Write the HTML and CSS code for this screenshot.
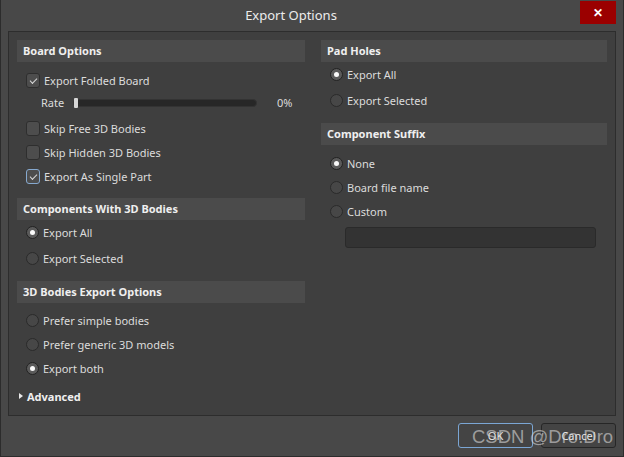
FILE: index.html
```html
<!DOCTYPE html>
<html>
<head>
<meta charset="utf-8">
<link rel="stylesheet" href="styles.css">
</head>
<body>
<div class="window">
  <div class="titlebar">
    <div class="title">Export Options</div>
    <div class="close">&#x2715;</div>
  </div>
  <div class="panel">
    <div class="col">
      <div class="hdr">Board Options</div>
      <div class="row r-first"><span class="cb checked"></span><span>Export Folded Board</span></div>
      <div class="rate">
        <span class="rate-label">Rate</span>
        <span class="track"><span class="handle"></span></span>
        <span class="pct">0%</span>
      </div>
      <div class="row r-skip"><span class="cb"></span><span>Skip Free 3D Bodies</span></div>
      <div class="row"><span class="cb"></span><span>Skip Hidden 3D Bodies</span></div>
      <div class="row"><span class="cb checked focus"></span><span>Export As Single Part</span></div>

      <div class="hdr h2">Components With 3D Bodies</div>
      <div class="row r-tight"><span class="rb on"></span><span>Export All</span></div>
      <div class="row r-gap"><span class="rb"></span><span>Export Selected</span></div>

      <div class="hdr h3">3D Bodies Export Options</div>
      <div class="row r-first2"><span class="rb"></span><span>Prefer simple bodies</span></div>
      <div class="row"><span class="rb"></span><span>Prefer generic 3D models</span></div>
      <div class="row"><span class="rb on"></span><span>Export both</span></div>
      <div class="adv"><span class="tri"></span><span>Advanced</span></div>
    </div>
    <div class="col">
      <div class="hdr">Pad Holes</div>
      <div class="row r-tight"><span class="rb on"></span><span>Export All</span></div>
      <div class="row r-gap"><span class="rb"></span><span>Export Selected</span></div>

      <div class="hdr h2r">Component Suffix</div>
      <div class="row r-first"><span class="rb on"></span><span>None</span></div>
      <div class="row"><span class="rb"></span><span>Board file name</span></div>
      <div class="row"><span class="rb"></span><span>Custom</span></div>
      <div class="input"></div>
    </div>
  </div>
  <div class="buttons">
    <div class="btn focus">OK</div>
    <div class="btn">Cancel</div>
  </div>
  <div class="watermark">CSDN @Dro.Dro</div>
</div>
</body>
</html>
```
FILE: styles.css
```css
* { box-sizing: border-box; }
html, body { margin: 0; padding: 0; background: #474747; }
body {
  font-family: "Noto Sans", "Open Sans", sans-serif;
  font-size: 11px;
  color: #dcdcdc;
}
.window {
  position: relative;
  width: 624px;
  height: 457px;
  background: #484848;
  border-left: 1px solid #2c2c2c;
  border-bottom: 1px solid #2c2c2c;
  border-right: 1px solid #2c2c2c;
  overflow: hidden;
}
.titlebar {
  display: flex;
  height: 31px;
  align-items: flex-start;
}
.title {
  flex: 1;
  text-align: center;
  font-size: 13px;
  color: #ececec;
  line-height: 31px;
  padding-left: 1px;
}
.close {
  width: 36px;
  height: 23px;
  margin-top: 1px;
  margin-right: 7px;
  background: #9b0000;
  color: #fff;
  font-weight: bold;
  font-size: 12px;
  display: flex;
  align-items: center;
  justify-content: center;
}
.panel {
  margin: 0 7px 0 7px;
  height: 385px;
  background: #3f3f3f;
  border: 1px solid #2d2d2d;
  padding: 8px 8px 0 8px;
  display: grid;
  grid-template-columns: 288px 286px;
  column-gap: 16px;
}
.col { display: flex; flex-direction: column; }
.hdr {
  height: 22px;
  line-height: 21px;
  background: #4b4b4b;
  padding-left: 6px;
  font-weight: bold;
  color: #efefef;
}
.row {
  height: 24px;
  display: flex;
  align-items: center;
  padding-left: 9px;
  padding-bottom: 2px;
  gap: 4px;
}
.r-first { margin-top: 7px; }
.r-skip { margin-top: 4px; }
.r-tight { margin-top: 1px; }
.r-gap { margin-top: 2px; }
.r-first2 { margin-top: 6px; }
.h2 { margin-top: 9px; }
.h3 { margin-top: 10px; }
.h2r { margin-top: 10px; }
.cb {
  width: 14px;
  height: 15px;
  border: 1px solid #2e2e2e;
  border-radius: 3px;
  background: #4d4d4d;
  position: relative;
  flex: none;
}
.cb.focus { border-color: #86a9cf; }
.cb.checked::after {
  content: "";
  position: absolute;
  left: 3px;
  top: 2px;
  width: 6px;
  height: 3px;
  border-left: 1px solid #d8d8d8;
  border-bottom: 1px solid #d8d8d8;
  transform: rotate(-45deg);
  transform-origin: center;
  margin-top: 2px;
}
.rb {
  width: 13px;
  height: 13px;
  border-radius: 50%;
  border: 1px solid #2a2a2a;
  background: #474747;
  flex: none;
  position: relative;
}
.rb.on { background: #5a5a5a; border-color: #222; }
.rb.on::after {
  content: "";
  position: absolute;
  left: 3px;
  top: 3px;
  width: 5px;
  height: 5px;
  border-radius: 50%;
  background: #fafafa;
}
.rate {
  height: 20px;
  display: flex;
  align-items: center;
  padding-left: 24px;
  padding-bottom: 1px;
}
.rate-label { width: 32px; }
.track {
  width: 184px;
  height: 8px;
  border-radius: 4px;
  background: #272727;
  border: 1px solid #333;
  display: flex;
  align-items: center;
}
.handle {
  width: 4px;
  height: 10px;
  border-radius: 1px;
  background: #d6d6d6;
}
.pct { margin-left: 20px; }
.adv {
  margin-top: 4px;
  height: 24px;
  display: flex;
  align-items: center;
  padding-left: 2px;
  padding-bottom: 2px;
  gap: 4px;
  font-weight: bold;
  color: #efefef;
}
.tri {
  width: 0;
  height: 0;
  border-left: 4px solid #e8e8e8;
  border-top: 3.5px solid transparent;
  border-bottom: 3.5px solid transparent;
}
.input {
  margin: 3px 11px 0 24px;
  height: 21px;
  background: #333333;
  border: 1px solid #2a2a2a;
  border-radius: 3px;
}
.buttons {
  display: flex;
  justify-content: flex-end;
  gap: 8px;
  padding: 7px 7px 0 0;
}
.btn {
  width: 75px;
  height: 25px;
  border: 1px solid #262626;
  border-radius: 3px;
  background: #444;
  display: flex;
  align-items: center;
  justify-content: center;
  color: #e6e6e6;
}
.btn.focus { border-color: #7ba6d4; }
.watermark {
  position: absolute;
  left: 471px;
  top: 426px;
  font-family: "Liberation Sans", Arial, sans-serif;
  font-size: 18.5px;
  color: rgba(215, 215, 215, 0.62);
  white-space: nowrap;
}
```
